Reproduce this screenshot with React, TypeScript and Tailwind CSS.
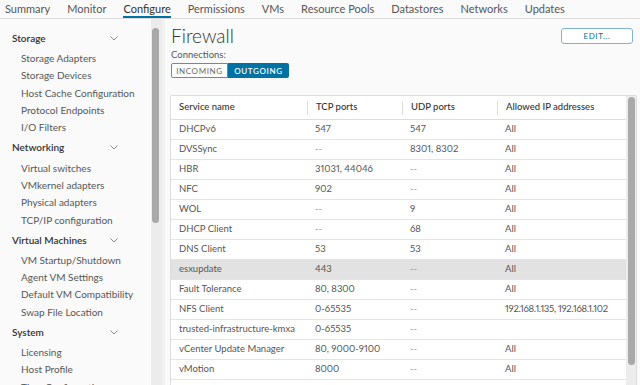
const tabs = ["Summary", "Monitor", "Configure", "Permissions", "VMs", "Resource Pools", "Datastores", "Networks", "Updates"]

const sections = [
  { title: "Storage", items: ["Storage Adapters", "Storage Devices", "Host Cache Configuration", "Protocol Endpoints", "I/O Filters"] },
  { title: "Networking", items: ["Virtual switches", "VMkernel adapters", "Physical adapters", "TCP/IP configuration"] },
  { title: "Virtual Machines", items: ["VM Startup/Shutdown", "Agent VM Settings", "Default VM Compatibility", "Swap File Location"] },
  { title: "System", items: ["Licensing", "Host Profile", "Time Configuration"] },
]

const rows = [
  ["DHCPv6", "547", "547", "All"],
  ["DVSSync", "--", "8301, 8302", "All"],
  ["HBR", "31031, 44046", "--", "All"],
  ["NFC", "902", "--", "All"],
  ["WOL", "--", "9", "All"],
  ["DHCP Client", "--", "68", "All"],
  ["DNS Client", "53", "53", "All"],
  ["esxupdate", "443", "--", "All"],
  ["Fault Tolerance", "80, 8300", "--", "All"],
  ["NFS Client", "0-65535", "--", "192.168.1.135, 192.168.1.102"],
  ["trusted-infrastructure-kmxa", "0-65535", "--", ""],
  ["vCenter Update Manager", "80, 9000-9100", "--", "All"],
  ["vMotion", "8000", "--", "All"],
  ["", "", "", ""],
]

function Chevron() {
  return (
    <svg width="8" height="5" viewBox="0 0 8 5" fill="none">
      <path d="M0.5 0.5 L4 4 L7.5 0.5" stroke="#8a8a8a" strokeWidth="1" />
    </svg>
  )
}

export default function App() {
  return (
    <div className="w-[640px] h-[385px] overflow-hidden bg-[#fafafa] text-[#565656] font-['Lato',sans-serif] proportional-nums flex flex-col">
      {/* Top tabs */}
      <div className="h-[19px] shrink-0 flex items-stretch gap-[17px] pl-[5px] border-b border-[#dcdcdc] bg-[#fafafa]">
        {tabs.map((t) => (
          <div
            key={t}
            className={`flex items-center text-[11px] leading-none pt-[1px] ${t === "Configure" ? "border-b-2 border-[#0072a3] text-[#333]" : "border-b-2 border-transparent"}`}
          >
            {t}
          </div>
        ))}
      </div>

      <div className="flex flex-1 min-h-0">
        {/* Sidebar */}
        <div className="w-[151px] shrink-0 pt-[8px] pl-[12px] pr-[33px]">
          {sections.map((s) => (
            <div key={s.title}>
              <div className="h-[23px] flex items-center justify-between">
                <span className="text-[10px] font-semibold text-[#333]">{s.title}</span>
                <Chevron />
              </div>
              {s.items.map((i) => (
                <div key={i} className="h-[17.3px] flex items-center pl-[9px] text-[10px] whitespace-nowrap">
                  {i}
                </div>
              ))}
            </div>
          ))}
        </div>
        <div className="w-[11px] shrink-0 bg-[#ececec] pt-[9px] px-[1px]">
          <div className="h-[195px] rounded-full bg-[#a9a9a9] mr-[2px]"></div>
        </div>
        <div className="w-[3px] shrink-0 bg-[#f2f2f2]"></div>

        {/* Main */}
        <div className="flex-1 min-w-0 flex flex-col pl-[6px] pr-[4px] pt-[6px]">
          <div className="h-[20px] flex items-center justify-between pr-[3px]">
            <span className="text-[19px] font-light text-[#333] leading-none">Firewall</span>
            <button className="w-[72px] h-[16px] border border-[#7fb2d6] rounded-[3px] bg-white text-[8px] tracking-[0.08em] text-[#0072a3] leading-none mt-[2px]">
              EDIT...
            </button>
          </div>
          <div className="h-[14px] mt-[3px] flex items-center text-[9.5px]">Connections:</div>
          <div className="flex mt-[1px] h-[15px] w-[118px] text-[8px] tracking-[0.08em] leading-none">
            <div className="w-[57px] flex items-center justify-center border border-[#4d93c4] rounded-l-[2px] bg-white text-[#666]">INCOMING</div>
            <div className="w-[61px] flex items-center justify-center bg-[#0072a3] rounded-r-[2px] text-white font-semibold">OUTGOING</div>
          </div>

          {/* Table */}
          <div className="mt-[17px] flex-1 min-h-0 ml-[-1px] mr-[-1px] flex border border-[#dddddd] border-b-0 rounded-t-[2px] bg-white overflow-hidden">
            <div className="flex-1 min-w-0 text-[9.5px]">
              <div className="h-[24px] grid grid-cols-[136px_95px_95px_1fr] items-center border-b border-[#dddddd] text-[#333] font-medium">
                <div className="pl-[8px]">Service name</div>
                <div className="pl-[8px] border-l border-[#dddddd] h-[14px] flex items-center">TCP ports</div>
                <div className="pl-[8px] border-l border-[#dddddd] h-[14px] flex items-center">UDP ports</div>
                <div className="pl-[8px] border-l border-[#dddddd] h-[14px] flex items-center">Allowed IP addresses</div>
              </div>
              {rows.map((r, idx) => (
                <div
                  key={idx}
                  className={`h-[20px] grid grid-cols-[136px_95px_95px_1fr] items-center border-b border-[#e4e4e4] ${r[0] === "esxupdate" ? "bg-[#e2e2e2]" : "bg-white"}`}
                >
                  {r.map((c, j) => (
                    <div
                      key={j}
                      className={`pl-[8px] whitespace-nowrap ${c === "--" ? "text-[#9a9a9a]" : ""} ${c.length > 20 && j === 3 ? "tracking-[-0.03em]" : ""}`}
                    >
                      {c}
                    </div>
                  ))}
                </div>
              ))}
            </div>
            <div className="w-[10px] shrink-0 bg-[#ececec] pt-[1px] px-[1px]">
              <div className="h-[268px] rounded-full bg-[#a9a9a9] mx-[0.5px]"></div>
            </div>
          </div>
        </div>
      </div>
    </div>
  )
}
